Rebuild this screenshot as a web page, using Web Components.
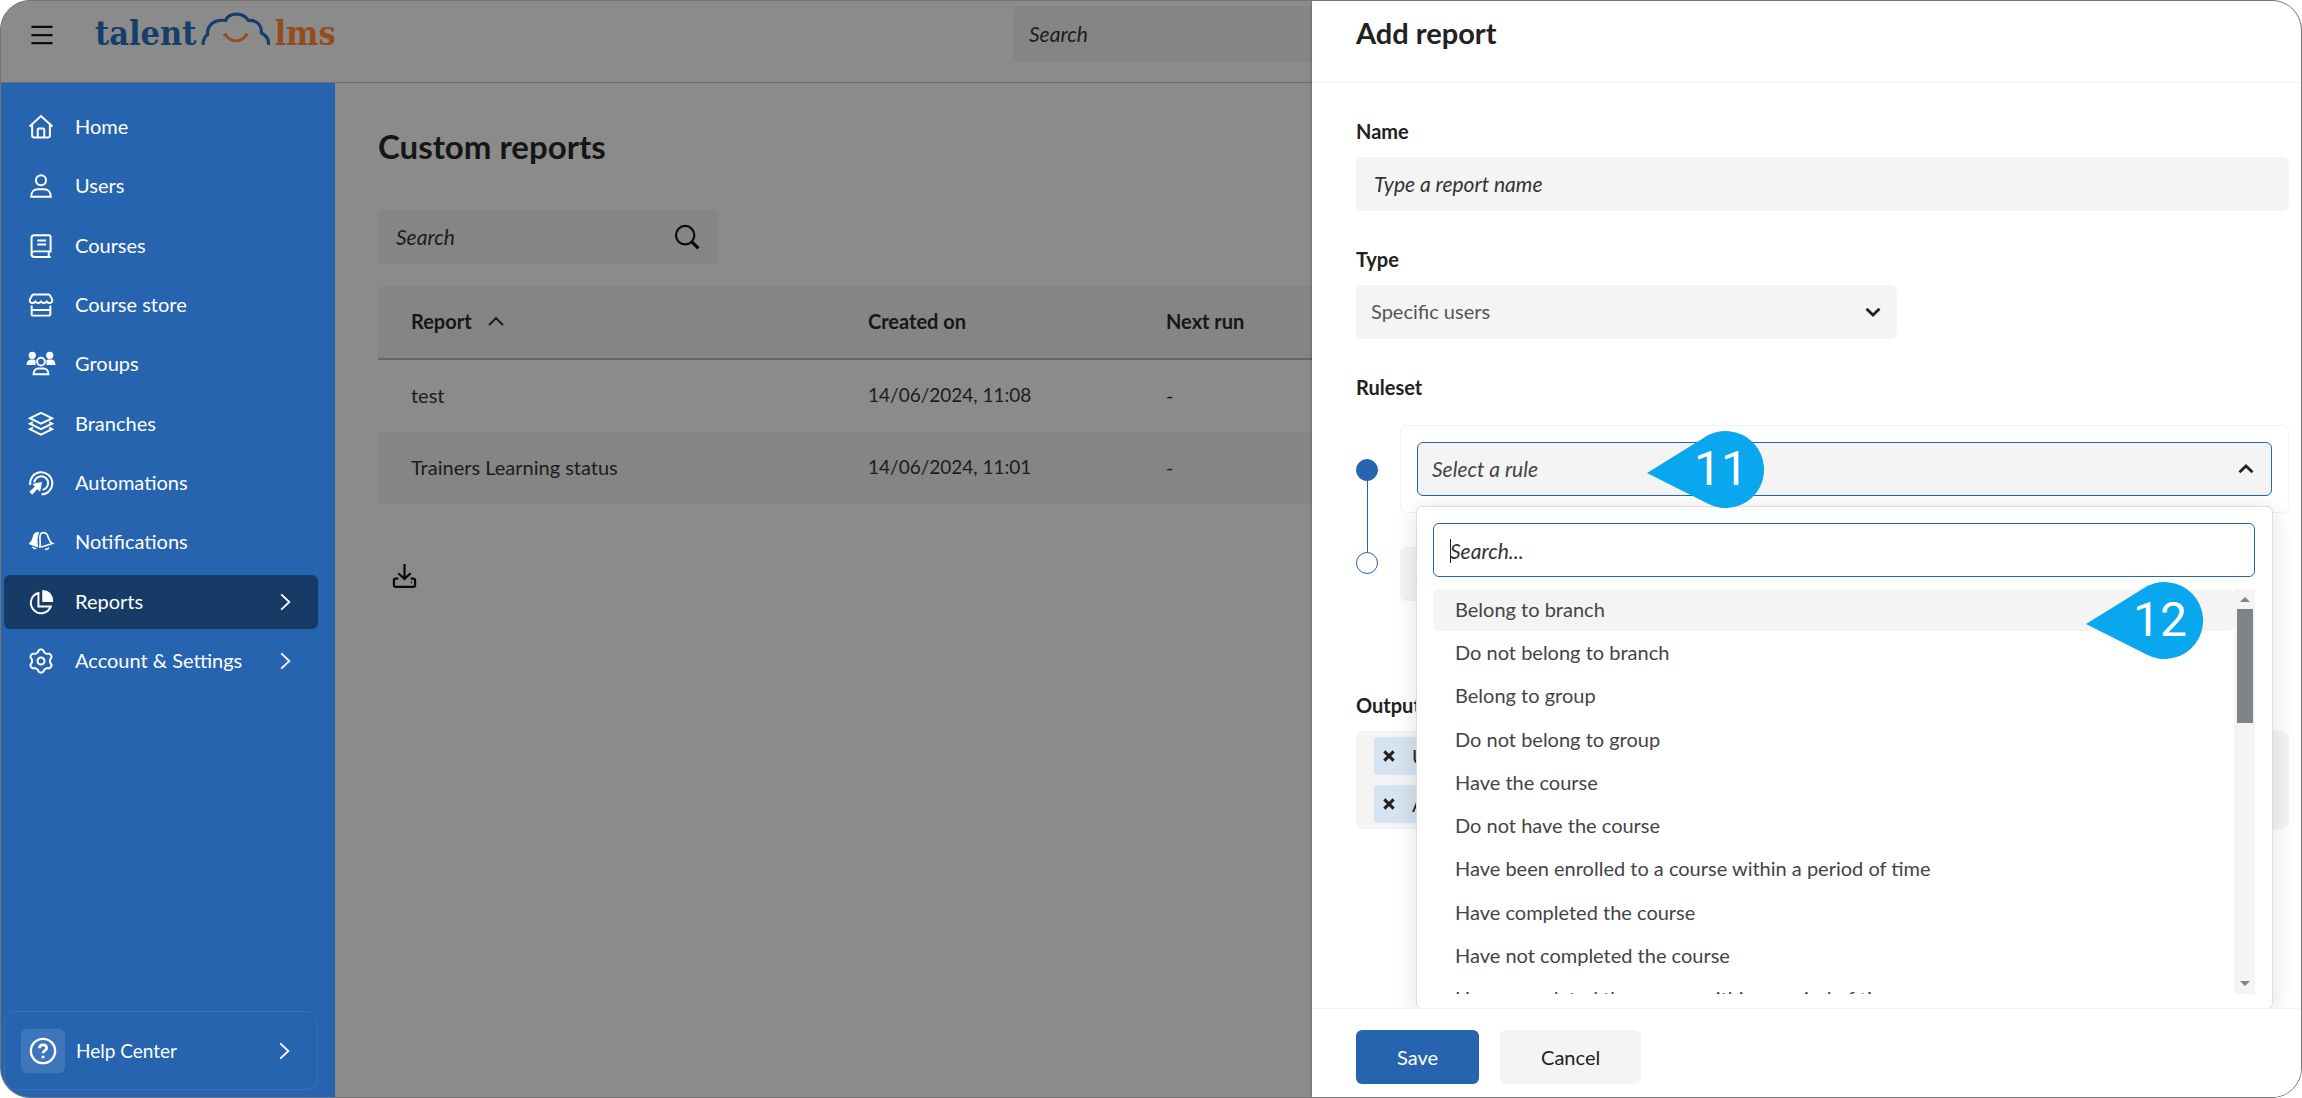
<!DOCTYPE html>
<html lang="en">
<head>
<meta charset="utf-8">
<title>Add report - TalentLMS</title>
<style>
  body { margin: 0; background: #fff; font-family: Lato, "Liberation Sans", sans-serif; font-size: 20px; line-height: 26px; color: #222; }
</style>
</head>
<body>
<app-shell></app-shell>
<script>
const define = (name, html, setup) => {
  const template = document.createElement('template');
  template.innerHTML = html;
  customElements.define(name, class extends HTMLElement {
    constructor() {
      super();
      this.attachShadow({ mode: 'open' }).append(template.content.cloneNode(true));
    }
    connectedCallback() { if (setup) setup(this, this.shadowRoot); }
  });
};

// Outline of the settings cog: a circle with six rounded teeth.
const cog = 'M' + Array.from({ length: 72 }, (_, i) => {
  const a = i * Math.PI / 36;
  const r = 8.8 + 1.1 * Math.tanh(2 * Math.cos(6 * a));
  return (12 + r * Math.sin(a)).toFixed(2) + ' ' + (12 - r * Math.cos(a)).toFixed(2);
}).join('L') + 'z';

const icons = {
  menu: '<g stroke-width="1.8"><path d="M3.5 5.5h17M3.5 12h17M3.5 18.5h17"/></g>',
  home: '<path d="M2.2 11.6 12 2.6l9.8 9M4.4 10v9.6c0 .8.6 1.3 1.3 1.3h12.6c.8 0 1.3-.5 1.3-1.3V10M9.2 20.9v-6.7c0-.5.4-.9.9-.9h3.8c.5 0 .9.4.9.9v6.7"/>',
  user: '<circle cx="12" cy="7" r="4.300"/><path d="M3.600 21.200c0-4 2.500-6.400 5.600-6.400h5.600c3.100 0 5.600 2.400 5.600 6.400z"/>',
  book: '<path d="M20.200 17.600V4c0-.8-.6-1.300-1.300-1.300H6.300C5 2.700 3.900 3.600 3.900 5v14c0 1.400 1.100 2.400 2.400 2.400h14M20.200 16.600H6.400c-1.400 0-2.400.8-2.400 2M18.600 17v4.200M8.800 7.200h7.600M8.800 10.800h7.600"/>',
  store: '<path d="M5.700 2.900h12.600c.6 0 1 .2 1.300.7l2 3.700c.4 1.700-.7 3-2.300 3s-2.400-1.200-2.400-1.200-1 1.200-2.500 1.200S12 9.100 12 9.100s-.9 1.200-2.400 1.200-2.500-1.200-2.500-1.200-.8 1.200-2.400 1.200S2 9 2.400 7.300l2-3.700c.3-.5.700-.7 1.300-.7zM4 12.500v7.200c0 .8.6 1.400 1.400 1.400h13.200c.8 0 1.400-.6 1.400-1.400v-7.200M4.200 16.300h15.600"/>',
  groups: '<g fill="currentColor" stroke="none"><circle cx="4.500" cy="4.600" r="3.100"/><circle cx="19.500" cy="4.600" r="3.100"/><path d="M-.4 12.800c0-2.800 1.500-4.600 3.600-4.600h2.400c.8 0 1.500.4 2 1-.5 1.300-.5 2.500 0 3.600zM24.400 12.800c0-2.800-1.500-4.600-3.600-4.600h-2.400c-.8 0-1.500.4-2 1 .5 1.300.5 2.500 0 3.600z"/></g><circle cx="12" cy="10" r="3.300"/><path d="M5.600 20.800c0-3.200 2-4.900 4.300-4.900h4.200c2.300 0 4.300 1.700 4.300 4.900z"/>',
  layers: '<path d="M12 2.400 21.500 7 12 11.600 2.500 7zM5 10.400 2.500 11.800 12 16.400l9.500-4.600-2.500-1.400M5 15.100l-2.500 1.400L12 21.200l9.500-4.700-2.500-1.400"/>',
  target: '<path d="M2.800 13.700A9.500 9.500 0 1 1 12.400 21.700M6.300 11.600a5.900 5.900 0 1 1 7 6.300"/><path d="M12.400 11.600 10.900 19l-2-2.100-4.500 4.700-2-2 4.700-4.500-2-2z" fill="currentColor" stroke-width=".8"/>',
  bell: '<path d="M10 3.800C7 3.300 5.700 5.300 5.200 8 4.800 10.500 3.700 11.800 1.700 13.500l7.500 2.700c-.9-4-.9-8.300.8-12.400zM4.600 16.400c.5 1.400 2.200 1.800 3.300 1.200z" fill="currentColor" stroke-width=".8"/><path d="M11 16.200C12 12 10.300 8.500 11.500 5.600c1-2.300 4.600-2.300 6 .5 1.400 2.800.9 5.200 4.300 7.200-3 .5-7 2.900-10.800 2.900zM15.500 18c1.300.5 2.600 0 3.200-1.300" stroke-width="1.400"/>',
  pie: '<path d="M9.800 4.300a8.800 8.800 0 1 0 10.600 11.500h-10.600z"/><path d="M13.600 2.300c5 .3 8.200 3.500 8.300 9.300h-8.300z" fill="currentColor" stroke-width="1"/>',
  gear: '<circle cx="12" cy="12" r="3"/><path d="' + cog + '" stroke-linejoin="round"/>',
  right: '<path d="M8.500 5 16 12l-7.500 7"/>',
  down: '<path d="M5.500 8.700 12 15l6.500-6.300" stroke-width="2.800"/>',
  up: '<path d="M5.500 15.300 12 9l6.500 6.300" stroke-width="2.800"/>',
  sort: '<path d="M6 15.500 12 9.500l6 6" stroke-width="1.600"/>',
  search: '<circle cx="10.300" cy="10.300" r="8.500" stroke-width="2"/><path d="m16.500 16.500 6 6" stroke-width="3"/>',
  download: '<path d="M12 1.800v13M6.500 10l5.500 5 5.500-5M6.500 14.800H4.200c-.9 0-1.600.7-1.600 1.600v4.100c0 .9.700 1.600 1.600 1.600h15.600c.9 0 1.600-.7 1.600-1.600v-4.100c0-.9-.7-1.600-1.600-1.600h-2.300M17.800 18h.8" stroke-width="2"/>',
  help: '<circle cx="12" cy="12" r="10.400" stroke-width="2"/><path d="M8.900 9.700c0-1.800 1.300-3 3.100-3s3.100 1.100 3.100 2.800c0 2.300-3.100 2.200-3.100 4.500" stroke-width="2.400"/><path d="M10.800 16h2.400v2.300h-2.400z" fill="currentColor" stroke="none"/>',
  close: '<path d="m5 5 14 14M19 5 5 19" stroke-width="4.500"/>'
};

define('ui-icon', `<style>
  :host { display: block; flex: none; width: var(--size, 28px); height: var(--size, 28px); }
  svg { display: block; width: 100%; height: 100%; overflow: visible; }
</style><svg viewBox="0 0 24 24" fill="none" stroke="currentColor" stroke-width="1.7" aria-hidden="true"></svg>`,
(el, root) => { root.querySelector('svg').innerHTML = icons[el.getAttribute('name')] || ''; });

define('app-logo', `<style>
  :host { display: block; }
  a { display: flex; align-items: flex-end; color: #173d69; text-decoration: none; font: bold 34px/40px "DejaVu Serif Condensed", "DejaVu Serif", serif; }
  svg { width: 70px; height: 34px; margin: 0 3px 7px 5px; }
  .lms { color: #934c1b; }
</style>
<a href="#"><span>talent</span>
<svg viewBox="0 0 70 34" fill="none" stroke="currentColor" stroke-width="3.200"><path d="M2 33c0-4.500 1-7.500 4.500-10.500C6 12.500 14 7 24.500 8.500 28.500 0 42 0 47.500 8.500c9-.5 13 5 13 12.500 5.500 3 7.500 7 7 12"/><path d="M24 22c5 9 17 9 22 0M22.500 23.500l3.500-1.500M44 22l3 1.500" stroke="#934c1b" stroke-width="2.600"/></svg>
<span class="lms">lms</span></a>`);

define('top-bar', `<style>
  :host { display: flex; align-items: flex-start; height: 81px; border-bottom: 1px solid #6c6c6c; background: #8b8b8b; color: #0c0c0c; }
  button { margin: 19px 0 0 26px; padding: 0; border: 0; background: none; color: inherit; }
  app-logo { margin: 11px 0 0 38px; flex: 1; }
  .find { box-sizing: border-box; flex: none; width: 56%; height: 56px; margin-top: 5px; padding: 0 16px 2px; border: 0; border-radius: 6px; background: #858585; font: italic 21px/26px Lato, sans-serif; }
  .find::placeholder { color: #1c1c1c; opacity: 1; }
</style>
<button aria-label="Menu"><ui-icon name="menu" style="--size:30px"></ui-icon></button><app-logo></app-logo>
<input class="find" type="search" placeholder="Search" aria-label="Search">`);

define('nav-item', `<style>
  :host { display: block; }
  a { display: flex; align-items: center; gap: 20px; height: 54px; padding: 0 23px; border-radius: 6px; color: #fff; text-decoration: none; }
  :host([active]) a { background: #173b67; }
  span { flex: 1; padding-bottom: 2px; }
  .more { --size: 26px; margin-right: -3px; }
</style><a href="#"><span><slot></slot></span></a>`,
(el, root) => {
  const link = root.querySelector('a');
  const icon = document.createElement('ui-icon');
  icon.setAttribute('name', el.getAttribute('icon'));
  link.prepend(icon);
  if (el.hasAttribute('more')) {
    const chevron = document.createElement('ui-icon');
    chevron.className = 'more';
    chevron.setAttribute('name', 'right');
    link.append(chevron);
  }
});

define('side-bar', `<style>
  :host { display: flex; flex-direction: column; justify-content: space-between; box-sizing: border-box; width: 334px; flex: none; padding: 17px 17px 7px 3px; background: #2764af; color: #fff; }
  nav { display: flex; flex-direction: column; justify-content: space-between; height: 588px; }
  .help { display: flex; align-items: center; gap: 11px; height: 77px; padding: 0 20px 0 16px; border: 1px solid #3870b6; border-radius: 12px; color: #fff; font-size: 19px; text-decoration: none; }
  .badge { padding: 8px; border-radius: 6px; background: #3d76bb; }
  .label { flex: 1; }
</style>
<nav>
  <nav-item icon="home">Home</nav-item>
  <nav-item icon="user">Users</nav-item>
  <nav-item icon="book">Courses</nav-item>
  <nav-item icon="store">Course store</nav-item>
  <nav-item icon="groups">Groups</nav-item>
  <nav-item icon="layers">Branches</nav-item>
  <nav-item icon="target">Automations</nav-item>
  <nav-item icon="bell">Notifications</nav-item>
  <nav-item icon="pie" active more>Reports</nav-item>
  <nav-item icon="gear" more>Account &amp; Settings</nav-item>
</nav>
<a class="help" href="#"><span class="badge"><ui-icon name="help"></ui-icon></span><span class="label">Help Center</span><ui-icon name="right" style="--size:26px"></ui-icon></a>`);

define('report-list', `<style>
  :host { display: block; flex: 1; min-width: 0; padding: 43px 0 0 43px; color: #1c1c1e; }
  h1 { margin: 0 0 44px; font-size: 33px; line-height: 40px; color: #161616; }
  .search { display: flex; align-items: center; box-sizing: border-box; width: 340px; height: 54px; padding: 0 18px; margin-bottom: 22px; border-radius: 6px; background: #858585; color: #0a0a0a; }
  input { flex: 1; min-width: 0; padding: 0; border: 0; background: none; font: italic 21px/26px Lato, sans-serif; }
  input::placeholder { color: #1c1c1c; opacity: 1; }
  table { width: 100%; border-collapse: separate; border-spacing: 0; table-layout: fixed; }
  th, td { box-sizing: border-box; height: 72px; padding: 0 0 2px; text-align: left; }
  th { height: 74px; background: #858585; border-bottom: 2px solid #666; color: #161616; }
  th:first-child, td:first-child { width: 490px; padding-left: 33px; border-radius: 6px 0 0 0; }
  th:nth-child(2) { width: 298px; }
  .date { font-size: 19px; }
  tr.alt td { background: #858585; }
  tr.alt td:first-child { border-radius: 0 0 0 6px; }
  .sort { display: flex; align-items: center; gap: 10px; }
  .export { margin: 58px 0 0 13px; padding: 0; border: 0; background: none; color: #0a0a0a; }
</style>
<h1>Custom reports</h1>
<div class="search"><input type="search" placeholder="Search" aria-label="Search reports"><ui-icon name="search" style="--size:26px"></ui-icon></div>
<table>
  <thead><tr><th><span class="sort">Report <ui-icon name="sort"></ui-icon></span></th><th>Created on</th><th>Next run</th></tr></thead>
  <tbody>
    <tr><td>test</td><td class="date">14/06/2024, 11:08</td><td>-</td></tr>
    <tr class="alt"><td>Trainers Learning status</td><td class="date">14/06/2024, 11:01</td><td>-</td></tr>
  </tbody>
</table>
<button class="export" aria-label="Export"><ui-icon name="download" style="--size:27px"></ui-icon></button>`);

define('step-callout', `<style>
  :host { display: block; position: absolute; width: 118px; height: 77px; z-index: 3; }
  svg { position: absolute; inset: 0; }
  span { position: absolute; right: 0; width: 88px; text-align: center; font: 48px/76px Roboto, sans-serif; color: #fff; }
</style><svg width="118" height="77" viewBox="0 0 118 77" aria-hidden="true"><path d="M0 42 56.500 7A38.500 38.500 0 1 1 60.500 72.500z" fill="#09a7ed"/></svg><span><slot></slot></span>`);

define('rule-picker', `<style>
  :host { display: block; position: relative; }
  .toggle { display: flex; align-items: center; justify-content: space-between; width: 100%; height: 54px; padding: 0 13px 0 14px; border: 1px solid #2764af; border-radius: 6px; background: #f4f4f4; color: #222; font: italic 21px/26px Lato, sans-serif; }
  .toggle span { color: #444; }
  .menu { position: absolute; z-index: 1; top: 64px; left: -1px; right: -1px; box-sizing: border-box; padding: 16px 17px 14px 16px; border: 1px solid #dcdcdc; border-radius: 6px; background: #fff; box-shadow: 0 4px 24px rgba(0,0,0,.13); }
  .filter { position: relative; margin-bottom: 12px; }
  input { box-sizing: border-box; display: block; width: 100%; height: 54px; padding: 0 16px; border: 1px solid #2764af; border-radius: 6px; background: #fff; font: italic 21px/26px Lato, sans-serif; outline: 0; }
  input::placeholder { color: #333; opacity: 1; }
  .caret { position: absolute; left: 17px; top: 16px; width: 1px; height: 24px; background: #222; }
  .window { display: flex; height: 405px; overflow: hidden; }
  ul { flex: 1; display: flex; flex-direction: column; justify-content: space-between; height: 431px; margin: 0; padding: 0; list-style: none; }
  li { height: 42px; padding-left: 22px; border-radius: 6px; line-height: 40px; color: #444; }
  li[aria-selected="true"] { background: #f4f4f4; }
  .bar { display: flex; flex-direction: column; align-items: center; width: 21px; background: #f4f4f4; }
  .bar i { width: 0; border: 5px solid transparent; border-top-width: 0; border-bottom-color: #7d858b; margin: 8px 0 7px; }
  .bar b { width: 16px; height: 114px; background: #7d858b; }
  .bar i:last-child { border-width: 5px 5px 0; border-color: #7d858b transparent; margin: auto 0 8px; }
</style>
<button class="toggle" type="button" aria-haspopup="listbox" aria-expanded="true"><span>Select a rule</span><ui-icon name="up" style="--size:24px"></ui-icon></button>
<div class="menu">
  <div class="filter"><input type="text" placeholder="Search..." aria-label="Search rules"><span class="caret"></span></div>
  <div class="window">
    <ul role="listbox" aria-label="Rules">
      <li role="option" aria-selected="true">Belong to branch</li>
      <li role="option">Do not belong to branch</li>
      <li role="option">Belong to group</li>
      <li role="option">Do not belong to group</li>
      <li role="option">Have the course</li>
      <li role="option">Do not have the course</li>
      <li role="option">Have been enrolled to a course within a period of time</li>
      <li role="option">Have completed the course</li>
      <li role="option">Have not completed the course</li>
      <li role="option">Have completed the course within a period of time</li>
    </ul>
    <div class="bar"><i></i><b></b><i></i></div>
  </div>
</div>`);

define('output-chip', `<style>
  :host { display: flex; align-items: center; gap: 15px; width: max-content; height: 38px; padding: 0 12px 0 7px; border-radius: 3px; background: #d6e3f0; }
  button { padding: 0; border: 0; background: none; color: #222; }
</style><button type="button" aria-label="Remove"><ui-icon name="close" style="--size:16px"></ui-icon></button><slot></slot>`);

define('report-drawer', `<style>
  :host { position: absolute; z-index: 2; top: 0; right: 0; bottom: 0; width: 43%; display: flex; flex-direction: column; background: #fff; box-shadow: 0 0 3px rgba(0,0,0,.35); }
  header { height: 81px; border-bottom: 1px solid #f3f3f3; padding-left: 44px; }
  h2 { margin: 0; font-size: 29px; line-height: 64px; }
  form { flex: 1; min-height: 0; overflow: hidden; padding: 35px 12px 0 44px; }
  label, .title { display: block; margin: 0 0 13px; font-weight: bold; }
  .name, select { box-sizing: border-box; display: block; height: 54px; border: 0; border-radius: 6px; background: #f4f4f4; margin-bottom: 35px; }
  .name { width: 100%; padding: 0 18px 2px; font: italic 21px/26px Lato, sans-serif; }
  .name::placeholder { color: #333; opacity: 1; }
  .type { position: relative; width: 58%; }
  select { appearance: none; width: 100%; padding: 0 15px 2px; font: 20px/26px Lato, sans-serif; color: #555; }
  .type ui-icon { position: absolute; right: 12px; top: 15px; }
  .rules { display: flex; gap: 22px; margin: 25px 0 91px; }
  .track { display: flex; flex-direction: column; align-items: center; width: 22px; margin-top: 34px; }
  .track i { box-sizing: border-box; width: 22px; height: 22px; border: 1px solid #2764af; border-radius: 50%; }
  .track i:first-child { background: #2764af; }
  .track b { width: 1px; height: 71px; background: #2764af; }
  .stack { flex: 1; }
  .card { box-sizing: border-box; height: 88px; padding: 16px; border: 1px solid #f3f3f3; border-radius: 6px; margin-bottom: 34px; }
  .next { height: 54px; width: 140px; border-radius: 6px; background: #f4f4f4; }
  .output { display: flex; flex-direction: column; gap: 10px; padding: 6px 18px; border-radius: 6px; background: #f4f4f4; }
  footer { display: flex; gap: 21px; height: 67px; padding: 21px 0 0 44px; border-top: 1px solid #f3f3f3; background: #fff; }
  footer button { height: 54px; padding: 0 41px; border: 0; border-radius: 6px; font: 20px/26px Lato, sans-serif; background: #f4f4f4; color: #222; }
  footer .save { background: #2764af; color: #fff; }
</style>
<header><h2>Add report</h2></header>
<form>
  <label for="name">Name</label>
  <input class="name" id="name" type="text" placeholder="Type a report name">
  <label for="type">Type</label>
  <div class="type"><select id="type"><option>Specific users</option></select><ui-icon name="down" style="--size:24px"></ui-icon></div>
  <div class="title">Ruleset</div>
  <div class="rules">
    <div class="track"><i></i><b></b><i></i></div>
    <div class="stack"><div class="card"><rule-picker></rule-picker></div><div class="next"></div></div>
  </div>
  <div class="title">Output</div>
  <div class="output"><output-chip>User</output-chip><output-chip>Assigned courses</output-chip></div>
</form>
<footer><button class="save">Save</button><button>Cancel</button></footer>`);

define('app-shell', `<style>
  :host { position: relative; display: flex; flex-direction: column; box-sizing: border-box; height: 100vh; border: 1px solid #757575; border-radius: 30px; overflow: hidden; background: #8b8b8b; }
  .body { flex: 1; min-height: 0; display: flex; }
  .first { left: 1646px; top: 430px; }
  .second { left: 2085px; top: 581px; }
</style>
<top-bar></top-bar>
<div class="body"><side-bar></side-bar><report-list></report-list></div>
<report-drawer></report-drawer>
<step-callout class="first">11</step-callout>
<step-callout class="second">12</step-callout>`);
</script>
</body>
</html>
